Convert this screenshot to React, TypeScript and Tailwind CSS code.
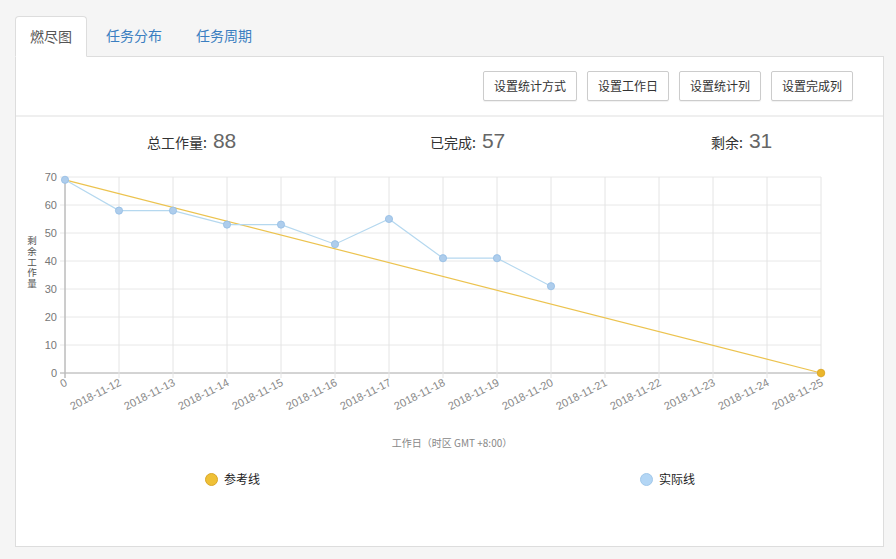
import React from 'react'

const cjk = { fontFamily: '"Noto Sans CJK SC", "Liberation Sans", sans-serif' }
const latin = '"Liberation Sans", "Noto Sans CJK SC", sans-serif'

const X0 = 65
const STEP = 54
const xAt = (i: number) => X0 + i * STEP
const yAt = (v: number) => 373 - v * 2.8

const dates = [
  '0',
  '2018-11-12',
  '2018-11-13',
  '2018-11-14',
  '2018-11-15',
  '2018-11-16',
  '2018-11-17',
  '2018-11-18',
  '2018-11-19',
  '2018-11-20',
  '2018-11-21',
  '2018-11-22',
  '2018-11-23',
  '2018-11-24',
  '2018-11-25',
]

const actual = [69, 58, 58, 53, 53, 46, 55, 41, 41, 31]

const BurnChart = () => {
  const last = dates.length - 1
  return (
    <svg width={867} height={290} viewBox="16 169 867 290" className="block" style={cjk}>
      {/* horizontal grid + y labels */}
      {[0, 10, 20, 30, 40, 50, 60, 70].map((v) => (
        <g key={v}>
          <line x1={60} x2={xAt(last)} y1={yAt(v)} y2={yAt(v)} stroke={v === 0 ? '#a8a8a8' : '#e8e8e8'} strokeWidth={1} />
          <text x={57} y={yAt(v) + 4} textAnchor="end" fontSize={11} fill="#777" fontFamily={latin}>
            {v}
          </text>
        </g>
      ))}
      {/* vertical grid */}
      {dates.map((d, i) => (
        <line key={d} x1={xAt(i)} x2={xAt(i)} y1={177} y2={378} stroke="#e4e4e4" strokeWidth={1} />
      ))}
      <line x1={X0} x2={X0} y1={177} y2={378} stroke="#a8a8a8" strokeWidth={1} />

      {/* x labels */}
      {dates.map((d, i) => (
        <text
          key={d}
          x={xAt(i) + 3}
          y={385}
          textAnchor="end"
          fontSize={11}
          fill="#888"
          fontFamily={latin}
          transform={`rotate(-27 ${xAt(i) + 3} 385)`}
        >
          {d}
        </text>
      ))}

      {/* y axis title, stacked vertically */}
      <text x={32} y={236} fontSize={9.5} fill="#555" letterSpacing={1.2} style={{ writingMode: 'vertical-rl' }}>
        剩余工作量
      </text>

      <text x={452} y={447} textAnchor="middle" fontSize={10} fill="#888">
        工作日（时区 GMT +8:00）
      </text>

      {/* reference line */}
      <line x1={X0} y1={yAt(69)} x2={xAt(last)} y2={yAt(0)} stroke="#ecc34f" strokeWidth={1.2} />
      <circle cx={xAt(last)} cy={yAt(0)} r={3.8} fill="#ebb62c" stroke="#d9a321" strokeWidth={0.8} />

      {/* actual line */}
      <polyline
        points={actual.map((v, i) => `${xAt(i)},${yAt(v)}`).join(' ')}
        fill="none"
        stroke="#b5d8ef"
        strokeWidth={1.2}
      />
      {actual.map((v, i) => (
        <circle key={i} cx={xAt(i)} cy={yAt(v)} r={3.6} fill="#aecdec" stroke="#93bde4" strokeWidth={0.8} />
      ))}
    </svg>
  )
}

const App = () => {
  return (
    <div className="min-h-[559px] bg-[#f5f5f5] pl-[15px] pr-[12px] pt-[16px]" style={cjk}>
      {/* Tabs */}
      <div className="flex border-b border-[#dddddd] text-[14px] leading-[19px]">
        <div className="-mb-px mr-[4px] rounded-t-[4px] border border-[#dddddd] border-b-white bg-white px-[14px] py-[10px] text-[#555]">
          燃尽图
        </div>
        <div className="mr-[4px] px-[15px] py-[10px] text-[#3b7fc1]">任务分布</div>
        <div className="px-[15px] py-[10px] text-[#3b7fc1]">任务周期</div>
      </div>

      {/* Toolbar */}
      <div className="flex h-[58px] items-center justify-end gap-[10px] border-x border-[#dddddd] bg-white pr-[30px] text-[12px] text-[#333]">
        {['设置统计方式', '设置工作日', '设置统计列', '设置完成列'].map((b) => (
          <button
            key={b}
            className="h-[30px] rounded-[2px] border border-[#cccccc] bg-white px-[10px] shadow-[0_1px_1px_rgba(0,0,0,0.06)]"
          >
            {b}
          </button>
        ))}
      </div>
      <div className="h-[2px] border-x border-[#dddddd] bg-[#efefef]" />

      {/* Chart panel */}
      <div className="h-[430px] border border-t-0 border-[#dddddd] bg-white">
        <div className="flex h-[52px] items-center pb-[4px] pl-[131px] text-[14px] text-[#333]">
          <div className="flex w-[283px] items-baseline">
            总工作量:
            <span className="ml-[6px] text-[21px] text-[#666]" style={{ fontFamily: latin }}>
              88
            </span>
          </div>
          <div className="flex w-[281px] items-baseline">
            已完成:
            <span className="ml-[6px] text-[21px] text-[#666]" style={{ fontFamily: latin }}>
              57
            </span>
          </div>
          <div className="flex items-baseline">
            剩余:
            <span className="ml-[6px] text-[21px] text-[#666]" style={{ fontFamily: latin }}>
              31
            </span>
          </div>
        </div>

        <BurnChart />

        {/* Legend */}
        <div className="flex h-[40px] items-center pl-[189px] text-[12px] text-[#222]">
          <div className="flex w-[435px] items-center gap-[6px]">
            <span className="h-[13px] w-[13px] rounded-full border border-[#d9a72a] bg-[#efc036]" />
            参考线
          </div>
          <div className="flex items-center gap-[6px]">
            <span className="h-[13px] w-[13px] rounded-full border border-[#a2c8ea] bg-[#b3d6f5]" />
            实际线
          </div>
        </div>
      </div>
    </div>
  )
}

export default App
